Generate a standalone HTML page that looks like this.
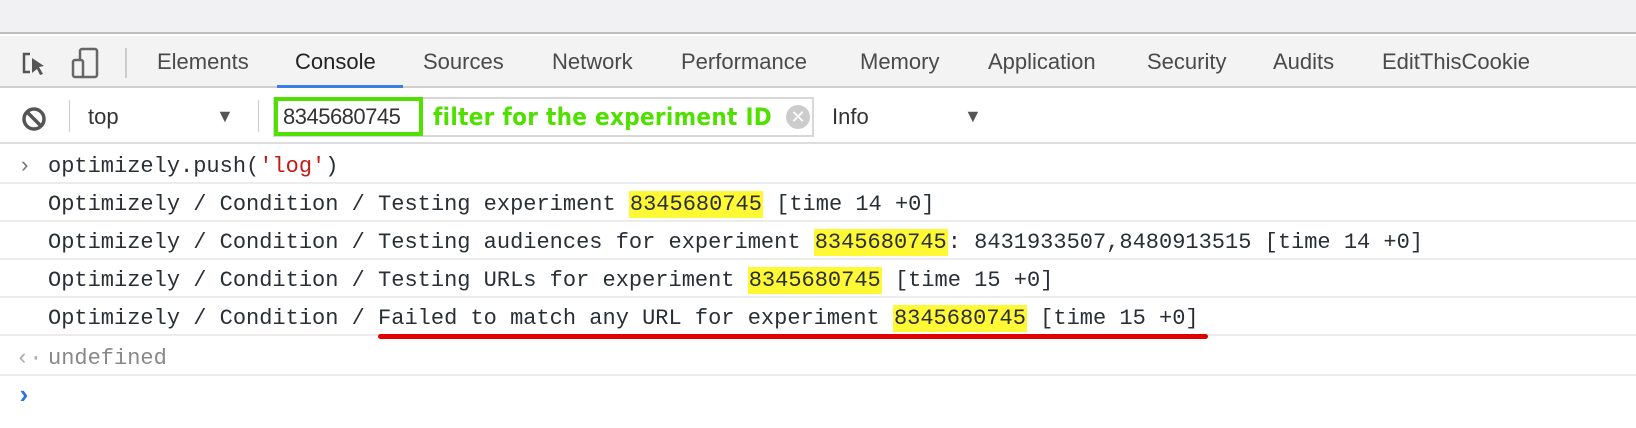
<!DOCTYPE html>
<html><head><meta charset="utf-8"><style>
*{margin:0;padding:0;box-sizing:border-box}
body{width:1636px;height:428px;overflow:hidden;background:#fff;position:relative;font-family:"Liberation Sans",sans-serif}
.a{position:absolute}
.tab{position:absolute;top:47px;font-size:22px;color:#4a4a4a;line-height:30px}
.row{position:absolute;left:0;width:1636px;height:38px;border-bottom:2px solid #ececec;font-family:"Liberation Mono",monospace;font-size:22px;color:#2a2f36;line-height:36px}
.row span.t{position:absolute;left:48px;top:3px;white-space:pre}
.hl{background:#fff835;padding:1px 1px}
</style></head><body>
<div class="a" style="left:0;top:0;width:1636px;height:34px;background:#f1f1f3;border-bottom:2px solid #bdbdbd"></div>
<div class="a" style="left:0;top:36px;width:1636px;height:52px;background:#f3f3f3;border-bottom:2px solid #cfcfcf"></div>
<svg class="a" style="left:20px;top:50px" width="30" height="30" viewBox="0 0 30 30"><path d="M10 4H4v18h6" fill="none" stroke="#555" stroke-width="2.5"/><path d="M12 8l12 8-5 1 4 7-3 1-3-6-5 4z" fill="#555"/></svg>
<svg class="a" style="left:70px;top:47px" width="30" height="32" viewBox="0 0 30 32"><rect x="10" y="2" width="17" height="28" rx="2" fill="none" stroke="#666" stroke-width="2.5"/><rect x="3" y="13" width="10" height="17" rx="2" fill="#f3f3f3" stroke="#666" stroke-width="2.5"/></svg>
<div class="a" style="left:125px;top:48px;width:2px;height:30px;background:#ccc"></div>
<div class="tab" style="left:157px">Elements</div>
<div class="tab" style="left:295px;color:#222">Console</div>
<div class="tab" style="left:423px">Sources</div>
<div class="tab" style="left:552px">Network</div>
<div class="tab" style="left:681px">Performance</div>
<div class="tab" style="left:860px">Memory</div>
<div class="tab" style="left:988px">Application</div>
<div class="tab" style="left:1147px">Security</div>
<div class="tab" style="left:1273px">Audits</div>
<div class="tab" style="left:1382px">EditThisCookie</div>
<div class="a" style="left:277px;top:85px;width:126px;height:3px;background:#3b7ee9"></div>
<div class="a" style="left:0;top:142px;width:1636px;height:2px;background:#ddd"></div>
<svg class="a" style="left:21px;top:106px" width="26" height="26" viewBox="0 0 26 26"><circle cx="13" cy="13" r="10" fill="none" stroke="#555" stroke-width="3.5"/><path d="M6 6l14 14" stroke="#555" stroke-width="3.5"/></svg>
<div class="a" style="left:69px;top:100px;width:1px;height:32px;background:#ccc"></div>
<div class="a" style="left:88px;top:104px;font-size:22px;color:#333">top</div>
<div class="a" style="left:216px;top:106px;font-size:18px;color:#555">▼</div>
<div class="a" style="left:258px;top:100px;width:1px;height:32px;background:#ccc"></div>
<div class="a" style="left:273px;top:97px;width:541px;height:40px;border:2px solid #d8d8d8"></div>
<div class="a" style="left:274px;top:97px;width:149px;height:39px;border:4px solid #52e000;background:#fff"></div>
<div class="a" style="left:283px;top:104px;font-size:22px;color:#333;letter-spacing:-0.5px">8345680745</div>
<div class="a" style="left:433px;top:103px;font-size:24px;font-weight:bold;color:#4fe000;letter-spacing:0.3px;font-family:'DejaVu Sans Condensed','DejaVu Sans',sans-serif">filter for the experiment ID</div>
<div class="a" style="left:786px;top:105px;width:24px;height:24px;border-radius:50%;background:#ccc;color:#fff;font-size:18px;text-align:center;line-height:24px">✕</div>
<div class="a" style="left:832px;top:104px;font-size:22px;color:#333">Info</div>
<div class="a" style="left:964px;top:106px;font-size:18px;color:#555">▼</div>
<div class="row" style="top:146px"><span class="a" style="left:18px;top:3px;color:#777;font-size:22px">›</span><span class="t">optimizely.push(<span style="color:#c41a16">'log'</span>)</span></div>
<div class="row" style="top:184px"><span class="t">Optimizely / Condition / Testing experiment <span class="hl">8345680745</span> [time 14 +0]</span></div>
<div class="row" style="top:222px"><span class="t">Optimizely / Condition / Testing audiences for experiment <span class="hl">8345680745</span>: 8431933507,8480913515 [time 14 +0]</span></div>
<div class="row" style="top:260px"><span class="t">Optimizely / Condition / Testing URLs for experiment <span class="hl">8345680745</span> [time 15 +0]</span></div>
<div class="row" style="top:298px"><span class="t">Optimizely / Condition / Failed to match any URL for experiment <span class="hl">8345680745</span> [time 15 +0]</span></div>
<div class="a" style="left:378px;top:334px;width:830px;height:5px;border-radius:3px;background:#e00000"></div>
<div class="row" style="top:338px"><span class="a" style="left:16px;top:3px;color:#aaa">‹·</span><span class="t" style="color:#888">undefined</span></div>
<div class="a" style="left:16px;top:381px;color:#2a73e8;font-size:26px;font-family:'Liberation Mono',monospace;font-weight:bold">›</div>
</body></html>
